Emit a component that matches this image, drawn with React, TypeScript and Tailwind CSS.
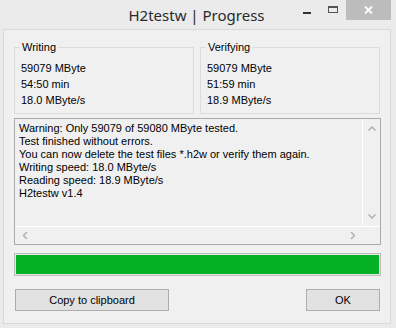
import React from "react";

const lines = [
  "Warning: Only 59079 of 59080 MByte tested.",
  "Test finished without errors.",
  "You can now delete the test files *.h2w or verify them again.",
  "Writing speed: 18.0 MByte/s",
  "Reading speed: 18.9 MByte/s",
  "H2testw v1.4",
];

function Group({ title, values, className }: { title: string; values: string[]; className?: string }) {
  return (
    <div className={"relative w-[180px] h-[67px] border border-[#dcdcdc] " + (className ?? "")}>
      <div className="absolute left-[5px] top-[-8px] bg-[#f0f0f0] px-[2px] leading-[14px]">{title}</div>
      <div className="flex flex-col pl-[6px] pt-[14px] gap-[3px] leading-[13px]">
        {values.map((v) => (
          <div key={v}>{v}</div>
        ))}
      </div>
    </div>
  );
}

function Chevron({ dir }: { dir: "up" | "down" | "left" | "right" }) {
  const rot = { up: 0, down: 180, left: 270, right: 90 }[dir];
  return (
    <svg width="8" height="5" viewBox="0 0 8 5" style={{ transform: `rotate(${rot}deg)` }}>
      <path d="M0.5 4.5 L4 1 L7.5 4.5" fill="none" stroke="#b0b0b0" strokeWidth="1.5" />
    </svg>
  );
}

export default function App() {
  return (
    <div
      className="w-[396px] h-[328px] bg-[#ebebeb] flex flex-col overflow-hidden text-[11px] text-black"
      style={{ fontFamily: '"Liberation Sans", Arial, sans-serif' }}
    >
      {/* title bar */}
      <div className="h-[29px] flex items-start relative shrink-0">
        <div
          className="absolute left-0 right-0 top-[3px] text-center text-[15px] leading-[24px] text-[#2a2a2a] pr-[3px]"
          style={{ fontFamily: '"Noto Sans", "Open Sans", sans-serif' }}
        >
          H2testw | Progress
        </div>
        <div className="ml-auto flex items-start relative">
          <div className="w-[26px] h-[20px] flex items-center justify-center">
            <div className="w-[8px] h-[2px] bg-[#333] mt-[6px]" />
          </div>
          <div className="w-[26px] h-[20px] flex items-center justify-center">
            <div className="w-[10px] h-[7px] border border-[#555] border-t-2 mt-[-1px]" />
          </div>
          <div className="w-[45px] h-[20px] bg-[#bcbcbc] flex items-center justify-center">
            <svg width="9" height="8" viewBox="0 0 9 8">
              <path d="M1 0.5 L8 7.5 M8 0.5 L1 7.5" stroke="#fff" strokeWidth="1.8" />
            </svg>
          </div>
          <div className="w-[5px]" />
        </div>
      </div>

      {/* client panel */}
      <div className="ml-[3px] w-[388px] h-[295px] border border-[#d9d9d9] bg-[#f0f0f0] flex flex-col pl-[10px] pt-[17px]">
        <div className="flex gap-[6px]">
          <Group title="Writing" values={["59079 MByte", "54:50 min", "18.0 MByte/s"]} />
          <Group title="Verifying" values={["59079 MByte", "51:59 min", "18.9 MByte/s"]} />
        </div>

        <div className="mt-[4px] w-[367px] h-[127px] border border-[#a9a9a9] grid grid-cols-[1fr_17px] grid-rows-[1fr_17px]">
          <div className="border-r border-b border-white pl-[4px] pt-[3px] leading-[13px]">
            {lines.map((l) => (
              <div key={l}>{l}</div>
            ))}
          </div>
          <div className="flex flex-col items-center justify-between py-[7px] border-b border-white">
            <Chevron dir="up" />
            <Chevron dir="down" />
          </div>
          <div className="flex items-center justify-between px-[6px]">
            <Chevron dir="left" />
            <Chevron dir="right" />
          </div>
          <div />
        </div>

        <div className="mt-[8px] w-[367px] h-[23px] border border-[#bcbcbc] bg-[#e6e6e6] p-px">
          <div className="w-full h-full bg-[#06b025]" />
        </div>

        <div className="mt-[13px] flex w-[366px] pl-px">
          <button className="w-[154px] h-[22px] border border-[#adadad] bg-[#e1e1e1] text-[11px] leading-none">
            Copy to clipboard
          </button>
          <button className="ml-auto w-[74px] h-[22px] border border-[#adadad] bg-[#e1e1e1] text-[11px] leading-none">
            OK
          </button>
        </div>
      </div>
    </div>
  );
}
